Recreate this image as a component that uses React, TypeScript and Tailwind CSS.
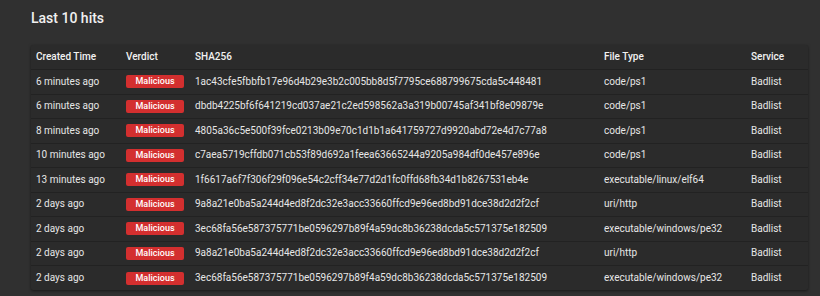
import React from "react";

const rows = [
  ["6 minutes ago", "1ac43cfe5fbbfb17e96d4b29e3b2c005bb8d5f7795ce688799675cda5c448481", "code/ps1"],
  ["6 minutes ago", "dbdb4225bf6f641219cd037ae21c2ed598562a3a319b00745af341bf8e09879e", "code/ps1"],
  ["8 minutes ago", "4805a36c5e500f39fce0213b09e70c1d1b1a641759727d9920abd72e4d7c77a8", "code/ps1"],
  ["10 minutes ago", "c7aea5719cffdb071cb53f89d692a1feea63665244a9205a984df0de457e896e", "code/ps1"],
  ["13 minutes ago", "1f6617a6f7f306f29f096e54c2cff34e77d2d1fc0ffd68fb34d1b8267531eb4e", "executable/linux/elf64"],
  ["2 days ago", "9a8a21e0ba5a244d4ed8f2dc32e3acc33660ffcd9e96ed8bd91dce38d2d2f2cf", "uri/http"],
  ["2 days ago", "3ec68fa56e587375771be0596297b89f4a59dc8b36238dcda5c571375e182509", "executable/windows/pe32"],
  ["2 days ago", "9a8a21e0ba5a244d4ed8f2dc32e3acc33660ffcd9e96ed8bd91dce38d2d2f2cf", "uri/http"],
  ["2 days ago", "3ec68fa56e587375771be0596297b89f4a59dc8b36238dcda5c571375e182509", "executable/windows/pe32"],
];

export default function App() {
  return (
    <div
      className="w-[820px] h-[296px] bg-[#303030] text-[#e6e6e6] overflow-hidden"
      style={{ fontFamily: "Roboto, 'Liberation Sans', sans-serif" }}
    >
      <div className="pl-[31px] pr-[12px] pt-[8px]">
        <h2 className="text-[14px] leading-[20px] font-medium text-[#f0f0f0] h-[37px]">Last 10 hits</h2>
        <div className="w-[777px] bg-[#2b2b2b] shadow-[0_1px_3px_rgba(0,0,0,0.5)] rounded-[2px]">
          <table className="w-full border-collapse table-fixed text-[10px] leading-[12px]">
            <colgroup>
              <col className="w-[90px]" />
              <col className="w-[69px]" />
              <col className="w-[409px]" />
              <col className="w-[147px]" />
              <col className="w-[62px]" />
            </colgroup>
            <thead>
              <tr className="h-[24.5px] border-b border-[#222222] text-left font-medium text-[#f2f2f2]">
                <th className="pl-[5px] font-medium">Created Time</th>
                <th className="pl-[5px] font-medium">Verdict</th>
                <th className="pl-[5px] font-medium">SHA256</th>
                <th className="pl-[5px] font-medium">File Type</th>
                <th className="pl-[5px] font-medium">Service</th>
              </tr>
            </thead>
            <tbody>
              {rows.map((r, i) => (
                <tr
                  key={i}
                  className={`h-[24.5px] ${i < rows.length - 1 ? "border-b border-[#222222]" : ""}`}
                >
                  <td className="pl-[5px] whitespace-nowrap">{r[0]}</td>
                  <td className="pl-[5px]">
                    <span className="inline-flex items-center justify-center w-[58px] h-[13px] rounded-[2px] bg-[#d32f2f] text-white text-[9px] leading-[13px] font-medium">
                      Malicious
                    </span>
                  </td>
                  <td className="pl-[5px] whitespace-nowrap">{r[1]}</td>
                  <td className="pl-[5px] whitespace-nowrap">{r[2]}</td>
                  <td className="pl-[5px]">Badlist</td>
                </tr>
              ))}
            </tbody>
          </table>
        </div>
      </div>
    </div>
  );
}
